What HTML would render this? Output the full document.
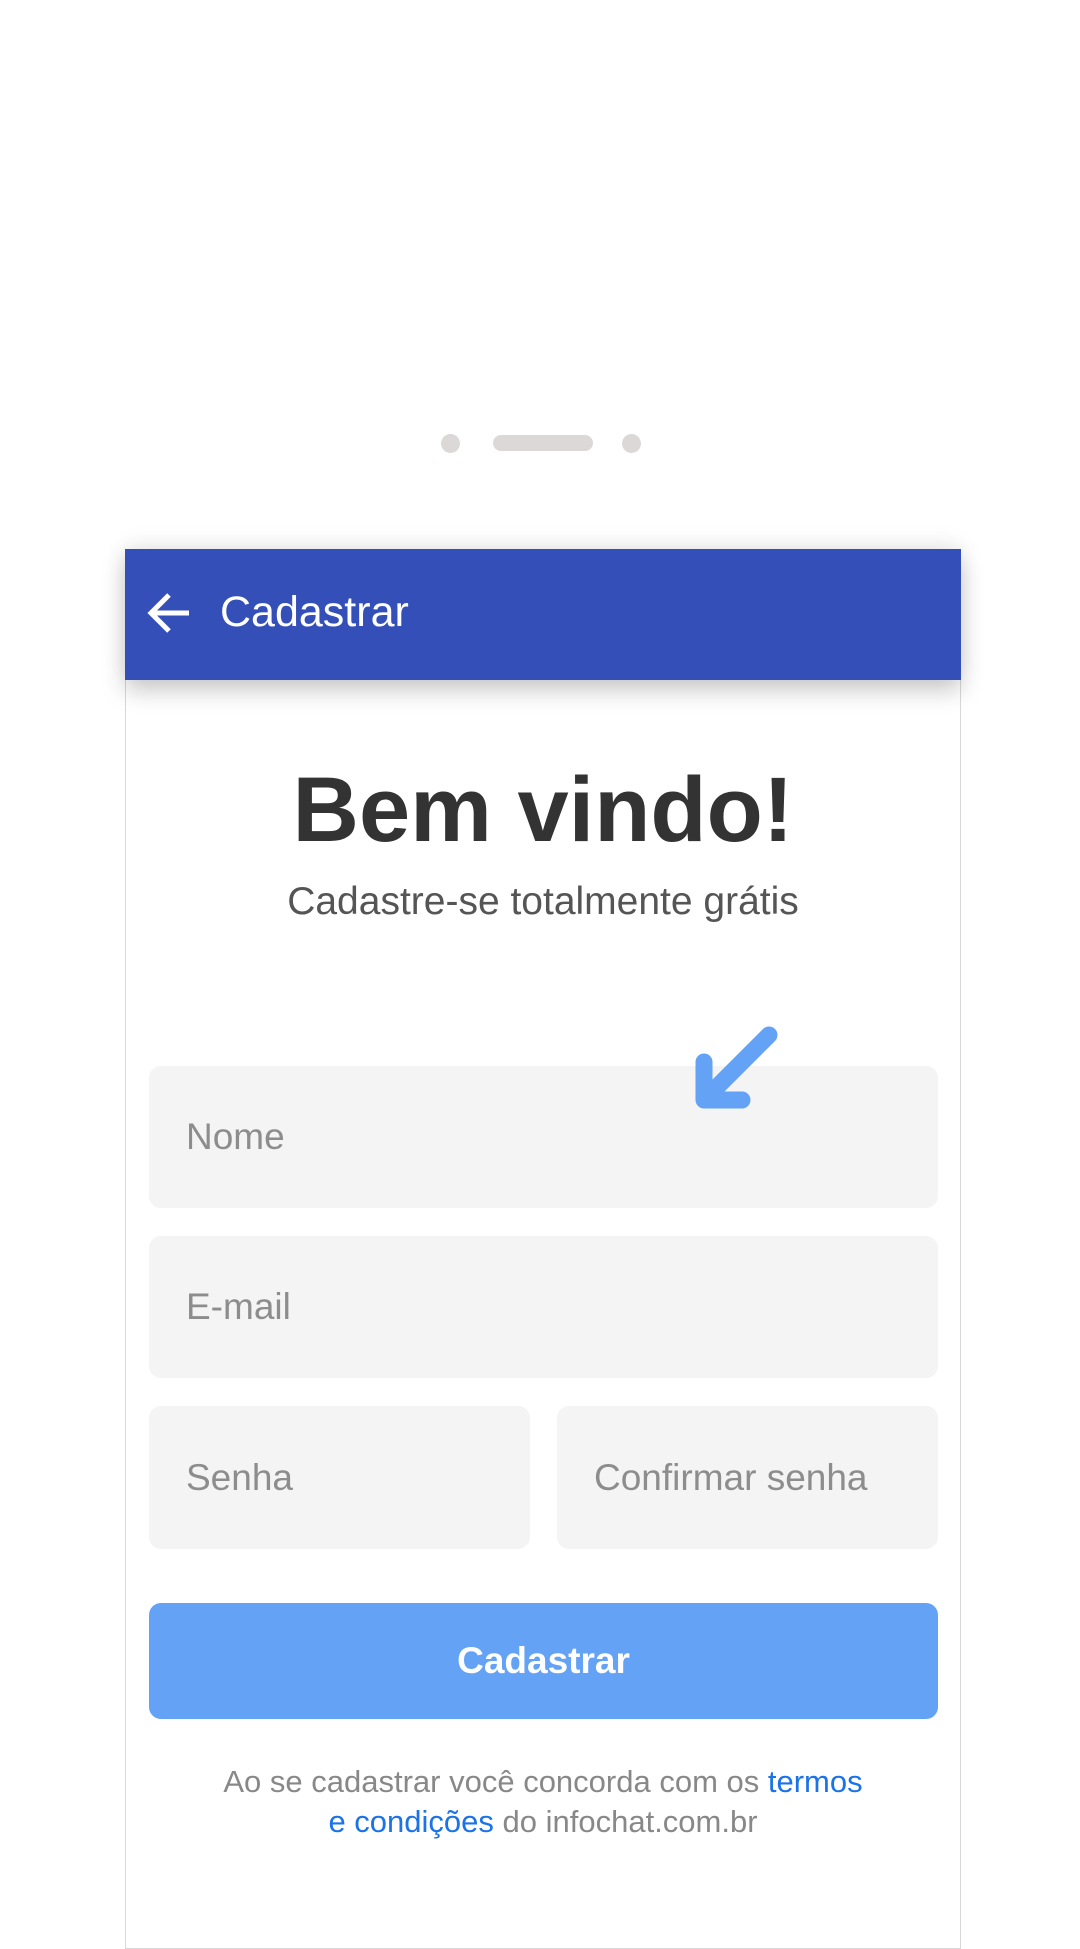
<!DOCTYPE html>
<html><head><meta charset="utf-8"><style>
*{margin:0;padding:0;box-sizing:border-box}
body{width:1080px;height:1920px;background:#fff;position:relative;overflow:hidden;font-family:"Liberation Sans",Roboto,sans-serif}
.a{position:absolute}
.dot{background:#ddd8d8;border-radius:12px}
.card{left:125px;top:549px;width:836px;height:1400px;border:1px solid #d8d8d8;background:#fff}
.hdr{left:125px;top:549px;width:836px;height:131px;background:#3450b8;box-shadow:0 10px 22px rgba(0,0,0,.22),0 -8px 20px rgba(0,0,0,.05)}
.inp{background:#f4f4f4;border-radius:12px;color:#8d8d8d;font-size:37px;padding-left:37px;display:flex;align-items:center}
</style></head><body>
<div class="a dot" style="left:441px;top:434px;width:19px;height:19px"></div>
<div class="a dot" style="left:493px;top:435px;width:100px;height:16px"></div>
<div class="a dot" style="left:622px;top:434px;width:19px;height:19px"></div>
<div class="a card"></div>
<div class="a hdr"></div>
<svg class="a" style="left:145px;top:590px" width="48" height="46" viewBox="0 0 48 46"><path d="M44 23H8M24 5L6 23l18 18" stroke="#fff" stroke-width="5" fill="none"/></svg>
<div class="a" style="left:220px;top:588px;color:#fff;font-size:43px">Cadastrar</div>
<div class="a" style="left:125px;width:836px;top:758px;text-align:center;font-size:92px;font-weight:bold;color:#333">Bem vindo!</div>
<div class="a" style="left:125px;width:836px;top:880px;text-align:center;font-size:39px;color:#555">Cadastre-se totalmente grátis</div>
<div class="a inp" style="left:149px;top:1066px;width:789px;height:142px">Nome</div>
<div class="a inp" style="left:149px;top:1236px;width:789px;height:142px">E-mail</div>
<div class="a inp" style="left:149px;top:1406px;width:381px;height:143px">Senha</div>
<div class="a inp" style="left:557px;top:1406px;width:381px;height:143px">Confirmar senha</div>
<svg class="a" style="left:690px;top:1024px" width="90" height="90" viewBox="0 0 90 90"><path d="M79 11L14 76M14 38V76H52" stroke="#64a2f5" stroke-width="17" stroke-linecap="round" stroke-linejoin="round" fill="none"/></svg>
<div class="a" style="left:149px;top:1603px;width:789px;height:116px;background:#64a2f5;border-radius:12px;color:#fff;font-weight:bold;font-size:37px;display:flex;align-items:center;justify-content:center">Cadastrar</div>
<div class="a" style="left:125px;width:836px;top:1762px;text-align:center;font-size:31px;color:#888;line-height:40px">Ao se cadastrar você concorda com os <span style="color:#1a73e8">termos</span><br><span style="color:#1a73e8">e condições</span> do infochat.com.br</div>
</body></html>
